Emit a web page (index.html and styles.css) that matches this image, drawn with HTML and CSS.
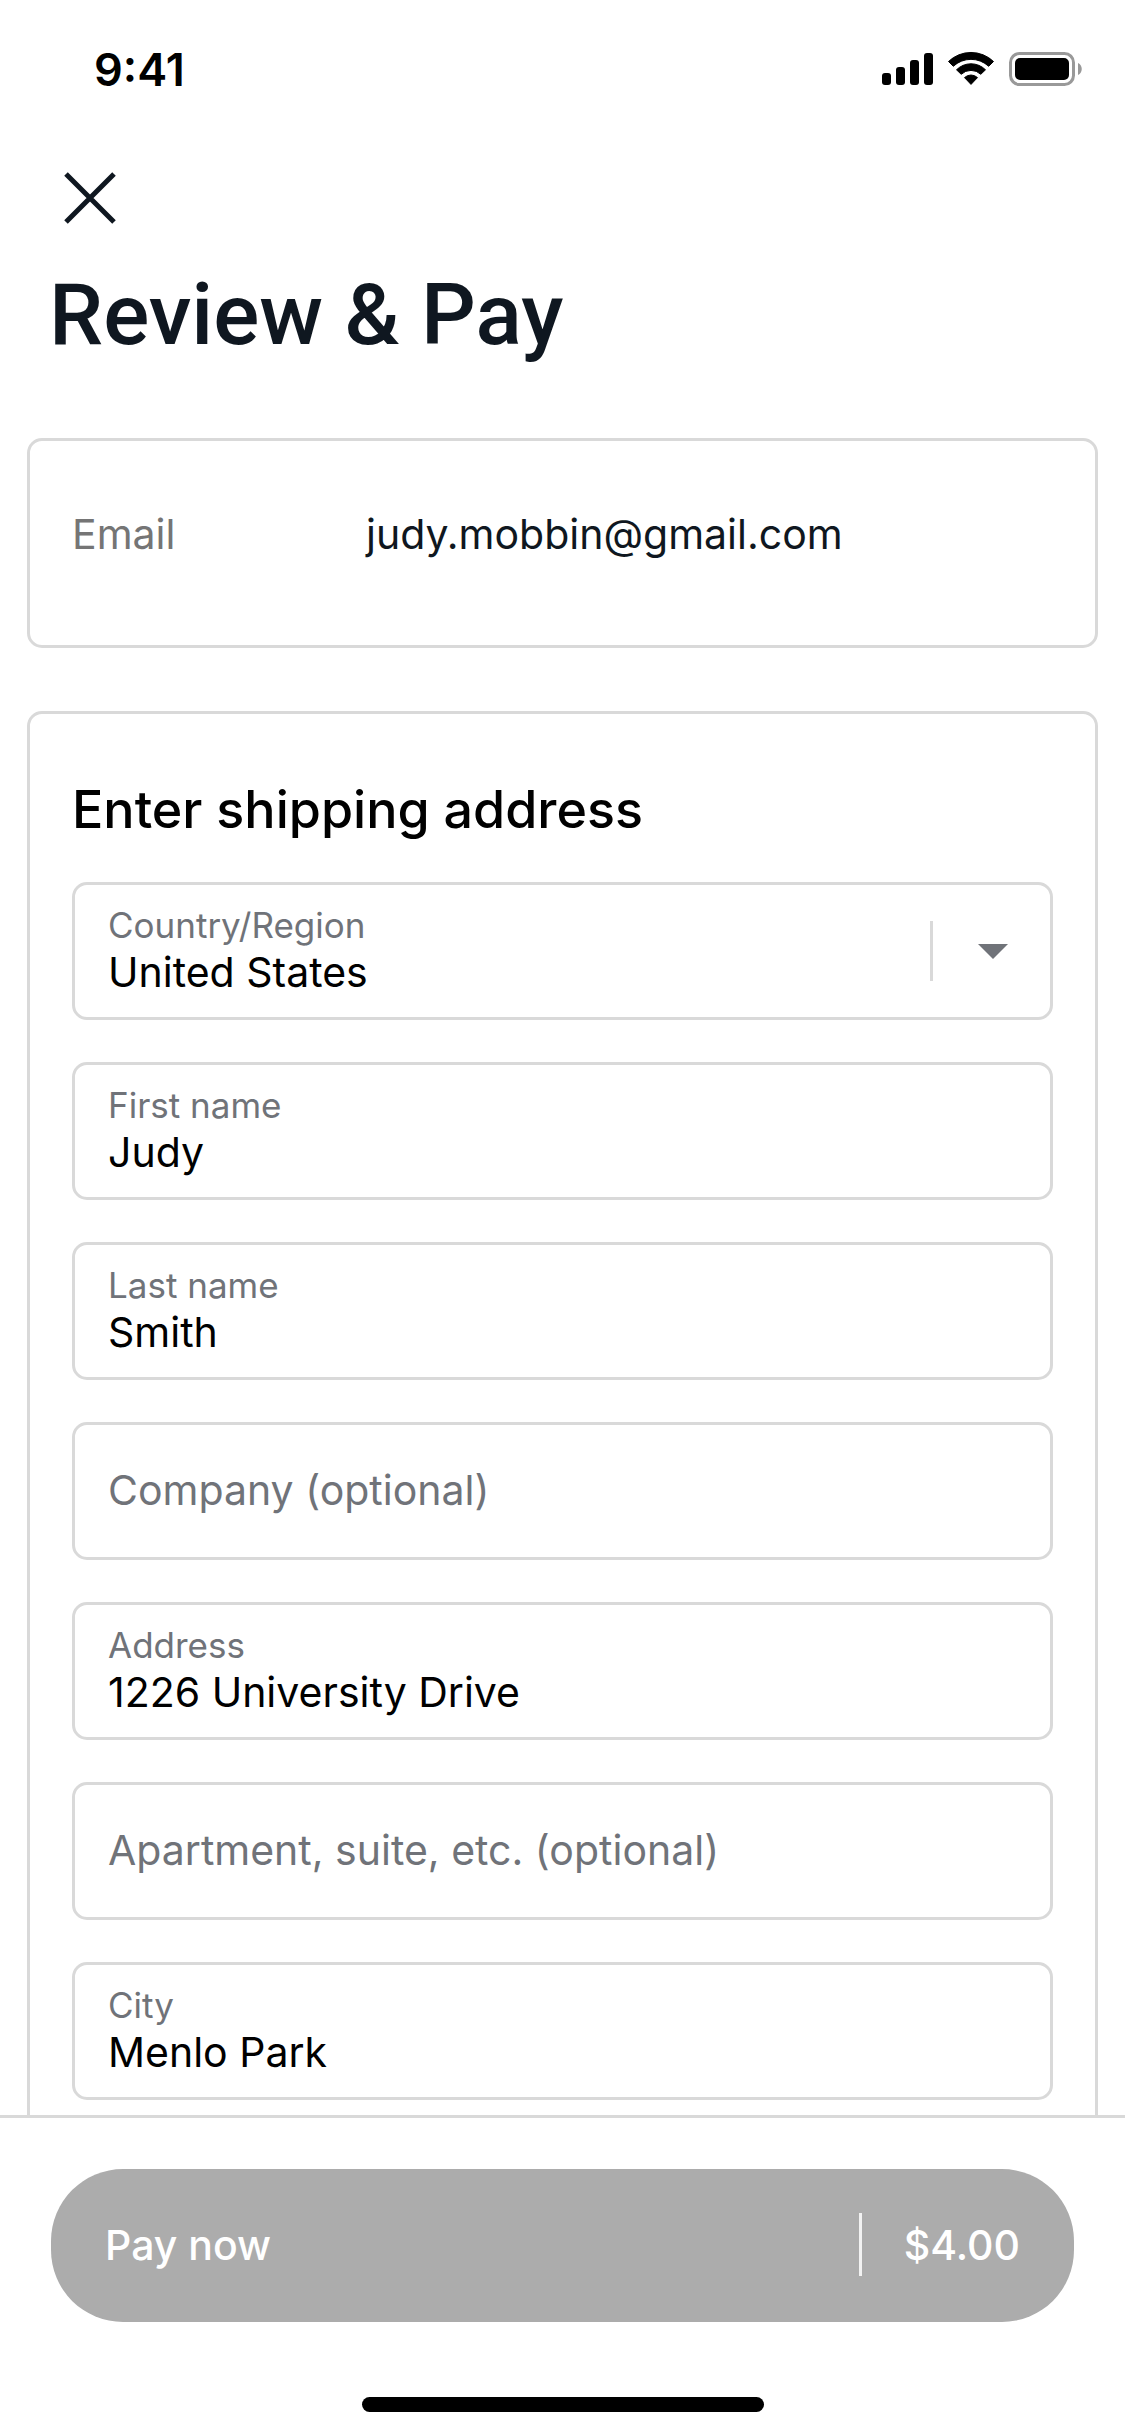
FILE: index.html
```html
<!DOCTYPE html>
<html lang="en">
<head>
  <meta charset="UTF-8">
  <meta name="viewport" content="width=device-width, initial-scale=1">
  <title>Review &amp; Pay</title>
  <link rel="stylesheet" href="styles.css">
</head>
<body>
  <div class="status-bar">
    <span class="time">9:41</span>
    <svg class="status-icons" width="204" height="36" viewBox="0 0 204 36">
      <!-- signal -->
      <rect x="3" y="22" width="9" height="12" rx="3"/>
      <rect x="17" y="16" width="9" height="18" rx="3"/>
      <rect x="31" y="9" width="9" height="25" rx="3"/>
      <rect x="45" y="2" width="9" height="32" rx="3"/>
      <!-- wifi -->
      <path d="M69.5 10.5 A32.5 32.5 0 0 1 114.5 10.5 L109.7 15.3 A26 26 0 0 0 74.3 15.3 Z" stroke="#000" stroke-width="1" stroke-linejoin="round"/>
      <path d="M77.5 18.8 A20.5 20.5 0 0 1 106.5 18.8 L101.8 23.3 A14.2 14.2 0 0 0 82.2 23.3 Z" stroke="#000" stroke-width="1" stroke-linejoin="round"/>
      <path d="M85.5 26.6 A9.5 9.5 0 0 1 98.5 26.6 L92 33.4 Z" stroke="#000" stroke-width="1" stroke-linejoin="round"/>
      <!-- battery -->
      <rect x="131.5" y="2.5" width="63" height="31" rx="9" fill="none" stroke="#999" stroke-width="3"/>
      <rect x="136" y="7" width="54" height="22" rx="5"/>
      <path d="M199 12 C204 14 204 22 199 24 Z" fill="#999"/>
    </svg>
  </div>

  <main class="content">
    <header class="page-header">
      <button type="button" class="close-btn" aria-label="Close">
        <svg width="54" height="54" viewBox="0 0 54 54">
          <path d="M3 3 L51 51 M51 3 L3 51" stroke="#0f1720" stroke-width="5" fill="none"/>
        </svg>
      </button>
      <h1>Review &amp; Pay</h1>
    </header>

    <section class="card email-card">
      <span class="email-label">Email</span>
      <span class="email-value">judy.mobbin@gmail.com</span>
    </section>

    <form class="card address-card" id="addressForm">
      <h2>Enter shipping address</h2>
      <div class="fields">
        <div class="field field-select">
          <div class="field-text">
            <label for="country">Country/Region</label>
            <select id="country">
              <option>United States</option>
            </select>
          </div>
          <span class="divider"></span>
          <svg class="arrow" width="30" height="15" viewBox="0 0 30 15">
            <path d="M0 0 H30 L15 15 Z" fill="#707379"/>
          </svg>
        </div>
        <div class="field">
          <label for="firstName">First name</label>
          <input type="text" id="firstName" value="Judy">
        </div>
        <div class="field">
          <label for="lastName">Last name</label>
          <input type="text" id="lastName" value="Smith">
        </div>
        <div class="field">
          <input type="text" id="company" placeholder="Company (optional)" aria-label="Company (optional)">
        </div>
        <div class="field">
          <label for="address">Address</label>
          <input type="text" id="address" value="1226 University Drive">
        </div>
        <div class="field">
          <input type="text" id="apartment" placeholder="Apartment, suite, etc. (optional)" aria-label="Apartment, suite, etc. (optional)">
        </div>
        <div class="field">
          <label for="city">City</label>
          <input type="text" id="city" value="Menlo Park">
        </div>
      </div>
    </form>
  </main>

  <footer class="pay-bar">
    <button type="submit" form="addressForm" class="pay-btn">
      <span class="pay-label">Pay now</span>
      <span class="divider"></span>
      <span>$4.00</span>
    </button>
    <div class="home-indicator"></div>
  </footer>
</body>
</html>
```
FILE: styles.css
```css
* {
  box-sizing: border-box;
}
body {
  margin: 0;
  height: 100vh;
  display: flex;
  flex-direction: column;
  background: #fff;
  color: #000;
  font-family: Inter, "Liberation Sans", sans-serif;
  font-size: 41px;
}
button, input, select {
  font: inherit;
  color: inherit;
  border: none;
  background: none;
  padding: 0;
  margin: 0;
}

/* Status bar */
.status-bar {
  flex: none;
  display: flex;
  align-items: center;
  justify-content: space-between;
  height: 138px;
  padding: 0 42px 0 94px;
}
.time {
  font-size: 45px;
  font-weight: 600;
}

/* Scrolling content */
.content {
  flex: 1;
  min-height: 0;
  overflow-y: auto;
  scrollbar-width: none;
  padding-bottom: 42px;
}
.page-header {
  padding: 33px 51px 0 49px;
}
.close-btn {
  display: flex;
  align-items: center;
  justify-content: center;
  width: 81px;
  height: 54px;
  cursor: pointer;
}
h1 {
  margin: 36px 0 69px;
  font-family: Roboto, "Liberation Sans", sans-serif;
  font-size: 86px;
  line-height: 108px;
  font-weight: 500;
  color: #0f1720;
}
.card {
  margin: 0 27px 63px;
  border: 3px solid #d9d9d9;
  border-radius: 15px;
}
.email-card {
  display: flex;
  padding: 63px 42px 81px;
  line-height: 60px;
}
.email-label {
  flex: none;
  width: 294px;
  color: #757575;
}
.email-value {
  color: #0f1720;
}
.address-card {
  padding: 63px 42px 42px;
}
h2 {
  margin: 0 0 39px;
  font-size: 52px;
  line-height: 66px;
  font-weight: 500;
}

/* Fields */
.fields {
  display: flex;
  flex-direction: column;
  gap: 42px;
}
.field {
  display: flex;
  flex-direction: column;
  justify-content: center;
  min-height: 138px;
  padding: 18px 33px 21px;
  border: 3px solid #d9d9d9;
  border-radius: 15px;
}
.field label {
  display: block;
  font-size: 35px;
  line-height: 45px;
  color: #707379;
}
.field input, .field select {
  display: block;
  width: 100%;
  height: 48px;
  line-height: 48px;
  outline: none;
  appearance: none;
}
.field input::placeholder {
  color: #707379;
  opacity: 1;
}
.field-select {
  flex-direction: row;
  align-items: center;
  padding: 0 42px 0 33px;
}
.field-text {
  flex: 1;
  padding: 18px 0 21px;
}
.divider {
  flex: none;
  width: 3px;
  height: 60px;
  background: #d9d9d9;
}
.arrow {
  flex: none;
  margin-left: 45px;
}

/* Footer */
.pay-bar {
  flex: none;
  padding: 51px 51px 24px;
  border-top: 3px solid #d9d9d9;
}
.pay-btn {
  display: flex;
  align-items: center;
  gap: 42px;
  width: 100%;
  height: 153px;
  padding: 0 54px 2px;
  border-radius: 72px;
  background: #acacac;
  color: #fff;
  font-weight: 500;
  cursor: pointer;
}
.pay-label {
  flex: 1;
  text-align: left;
}
.pay-btn .divider {
  height: 63px;
  background: #f2f2f2;
}
.home-indicator {
  width: 402px;
  height: 15px;
  margin: 75px auto 0;
  border-radius: 8px;
  background: #000;
}
```
